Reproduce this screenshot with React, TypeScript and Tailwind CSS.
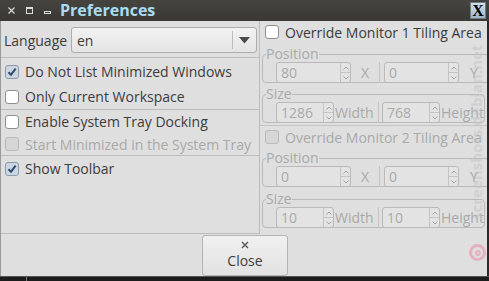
import React from 'react';

const font = { fontFamily: '"Open Sans", "DejaVu Sans", sans-serif' };

function Check({ checked, disabled }: { checked?: boolean; disabled?: boolean }) {
  if (checked) {
    return (
      <span className="w-[14px] h-[14px] rounded-[3px] border border-[#8a9aac] bg-[#cbd6e2] flex items-center justify-center shrink-0">
        <svg width="10" height="10" viewBox="0 0 10 10">
          <path d="M1.5 5.2 L4 7.8 L8.6 1.6" fill="none" stroke="#2e4a6e" strokeWidth="2" />
        </svg>
      </span>
    );
  }
  return (
    <span
      className={
        disabled
          ? 'w-[14px] h-[14px] rounded-[3px] border border-[#b9b9b9] bg-[#d6d6d6] shrink-0'
          : 'w-[14px] h-[14px] rounded-[3px] border border-[#8f8f8f] bg-white shrink-0'
      }
    />
  );
}

function CheckRow({ label, checked, disabled, h }: { label: string; checked?: boolean; disabled?: boolean; h: string }) {
  return (
    <div className={`flex items-center gap-[6px] pl-[4px] ${h}`}>
      <Check checked={checked} disabled={disabled} />
      <span className={disabled ? 'text-[#a9a9a9] whitespace-nowrap' : 'text-[#3c3c3c] whitespace-nowrap'}>{label}</span>
    </div>
  );
}

function Spin({ value, w }: { value: string; w: string }) {
  return (
    <div className={`${w} h-[21px] border border-[#b9b9b9] rounded-[3px] bg-[#e3e3e3] flex shrink-0`}>
      <span className="flex-1 pl-[4px] text-[#a9a9a9] leading-[19px]">{value}</span>
      <div className="w-[10px] border-l border-[#c4c4c4] flex flex-col">
        <div className="flex-1 border-b border-[#c4c4c4] flex items-center justify-center">
          <svg width="6" height="4" viewBox="0 0 6 4"><path d="M0.5 3.5 L3 1 L5.5 3.5" fill="none" stroke="#a5a5a5" /></svg>
        </div>
        <div className="flex-1 flex items-center justify-center">
          <svg width="6" height="4" viewBox="0 0 6 4"><path d="M0.5 0.5 L3 3 L5.5 0.5" fill="none" stroke="#a5a5a5" /></svg>
        </div>
      </div>
    </div>
  );
}

function Frame({ label, children, cls }: { label: string; children: React.ReactNode; cls: string }) {
  return (
    <fieldset className={`ml-[2px] w-[223px] border border-[#b9b9b9] rounded-[4px] ${cls}`}>
      <legend className="ml-[3px] leading-[12px] text-[#a9a9a9]">{label}</legend>
      <div className="mt-[2px] -mb-px">{children}</div>
    </fieldset>
  );
}

function PosRow({ a, b }: { a: string; b: string }) {
  return (
    <div className="flex items-center pl-[13px] text-[#a9a9a9]">
      <Spin value={a} w="w-[75px]" />
      <span className="w-[28px] text-center">X</span>
      <span className="w-px h-[21px] bg-[#c4c4c4]" />
      <span className="w-[4px]" />
      <Spin value={b} w="w-[75px]" />
      <span className="w-[30px] text-center">Y</span>
    </div>
  );
}

function SizeRow({ a, b }: { a: string; b: string }) {
  return (
    <div className="flex items-center pl-[13px] text-[#a9a9a9] whitespace-nowrap overflow-hidden">
      <Spin value={a} w="w-[58px]" />
      <span className="w-[44px] pl-px">Width</span>
      <span className="w-px h-[21px] bg-[#c4c4c4]" />
      <span className="w-[3px]" />
      <Spin value={b} w="w-[58px]" />
      <span className="pl-px">Height</span>
    </div>
  );
}

function Monitor({ n, disabled }: { n: number; disabled?: boolean }) {
  return (
    <>
      <div className="flex items-center gap-[6px] pl-[5px] h-[22px]">
        <Check disabled={disabled} />
        <span className={disabled ? 'text-[#a9a9a9] whitespace-nowrap' : 'text-[#3c3c3c] whitespace-nowrap'}>
          Override Monitor {n} Tiling Area
        </span>
      </div>
      <Frame label="Position" cls={n === 1 ? 'mt-[5px]' : 'mt-[4px]'}>
        <PosRow a={n === 1 ? '80' : '0'} b="0" />
      </Frame>
      <Frame label="Size" cls={n === 1 ? 'mt-[5px]' : 'mt-[6px]'}>
        <SizeRow a={n === 1 ? '1286' : '10'} b={n === 1 ? '768' : '10'} />
      </Frame>
    </>
  );
}

export default function App() {
  return (
    <div className="w-[489px] h-[281px] overflow-hidden relative bg-[#1c1c1c] text-[14px]" style={font}>
      {/* title bar */}
      <div className="h-[21px] bg-gradient-to-b from-[#45443f] to-[#393834] flex items-center relative">
        <div className="flex items-center gap-[11px] pl-[8px]">
          <svg width="7" height="7" viewBox="0 0 7 7"><path d="M0.5 0.5 L6.5 6.5 M6.5 0.5 L0.5 6.5" stroke="#dcdcdc" strokeWidth="1.2" /></svg>
          <span className="w-[7px] h-[7px] border border-[#dcdcdc] border-t-2" />
          <span className="mt-[3px] w-[7px] h-[3px] border border-[#dcdcdc]" />
        </div>
        <span className="ml-[9px] text-[16px] font-bold text-[#a9dcf2] leading-[21px]">Preferences</span>
        <div className="ml-auto mr-[3px] w-[16px] h-[17px] border border-[#6c7c88] bg-gradient-to-b from-[#d3e0e8] to-[#9fb6c6] flex items-center justify-center">
          <span className="text-black font-bold text-[16px] leading-none" style={{ fontFamily: '"Liberation Serif", serif' }}>X</span>
        </div>
      </div>

      {/* window body */}
      <div className="h-[255px] bg-[#dfdfdf] border-l border-[#9a9a9a] border-r-2 border-r-[#2a2a2a] flex flex-col">
        <div className="h-[213px] flex">
          {/* left panel */}
          <div className="w-[259px] border-r border-b border-[#bcbcbc] flex flex-col shrink-0">
            <div className="mt-[6px] h-[26px] flex items-center pl-[3px]">
              <span className="text-[#3c3c3c] w-[67px]">Language</span>
              <div className="w-[186px] h-[26px] border border-[#adadad] rounded-[3px] bg-gradient-to-b from-[#f2f2f2] to-[#e4e4e4] flex items-center">
                <span className="flex-1 pl-[5px] text-[#3c3c3c]">en</span>
                <span className="w-px h-[18px] bg-[#bdbdbd]" />
                <svg className="mx-[6px]" width="11" height="7" viewBox="0 0 11 7"><path d="M0 0 L11 0 L5.5 6.5 Z" fill="#4a4a4a" /></svg>
              </div>
            </div>
            <div className="mt-[4px] h-px bg-[#bcbcbc]" />
            <CheckRow h="h-[25px] mt-px" label="Do Not List Minimized Windows" checked />
            <CheckRow h="h-[25px]" label="Only Current Workspace" />
            <div className="h-px bg-[#bcbcbc]" />
            <CheckRow h="h-[23px]" label="Enable System Tray Docking" />
            <CheckRow h="h-[22px]" label="Start Minimized in the System Tray" disabled />
            <div className="h-px bg-[#bcbcbc]" />
            <CheckRow h="h-[25px]" label="Show Toolbar" checked />
          </div>

          {/* right panel */}
          <div className="flex-1 overflow-hidden flex flex-col">
            <Monitor n={1} />
            <div className="mt-[2px] h-px bg-[#c4c4c4]" />
            <Monitor n={2} disabled />
          </div>
        </div>

        {/* action area */}
        <div className="flex-1 flex items-start">
          <button className="ml-[201px] mt-px w-[86px] h-[41px] border border-[#b3b3b3] rounded-[3px] bg-gradient-to-b from-[#f0f0f0] to-[#e2e2e2] flex flex-col items-center justify-center text-[#3c3c3c]">
            <svg width="8" height="8" viewBox="0 0 8 8"><path d="M1 1 L7 7 M7 1 L1 7" stroke="#555" strokeWidth="1.4" /></svg>
            <span className="leading-[18px] mt-[3px]">Close</span>
          </button>
        </div>
      </div>

      {/* bottom strip */}
      <div className="h-[5px] border-t border-[#555] flex">
        <span className="ml-[26px] w-px bg-[#777]" />
      </div>

      {/* watermark */}
      <div className="absolute left-[468px] top-[30px] w-[18px] h-[204px] flex items-center justify-center pointer-events-none">
        <span className="-rotate-90 whitespace-nowrap text-[15px] font-bold text-[#c2c2c2] opacity-50">screenshots.debian.net</span>
      </div>
      <div className="absolute left-[469px] top-[244px] w-[17px] h-[17px] rounded-full border-[3px] border-[#e8a6b8] flex items-center justify-center opacity-80">
        <span className="w-[6px] h-[6px] rounded-full border-2 border-[#e8a6b8]" />
      </div>
    </div>
  );
}
